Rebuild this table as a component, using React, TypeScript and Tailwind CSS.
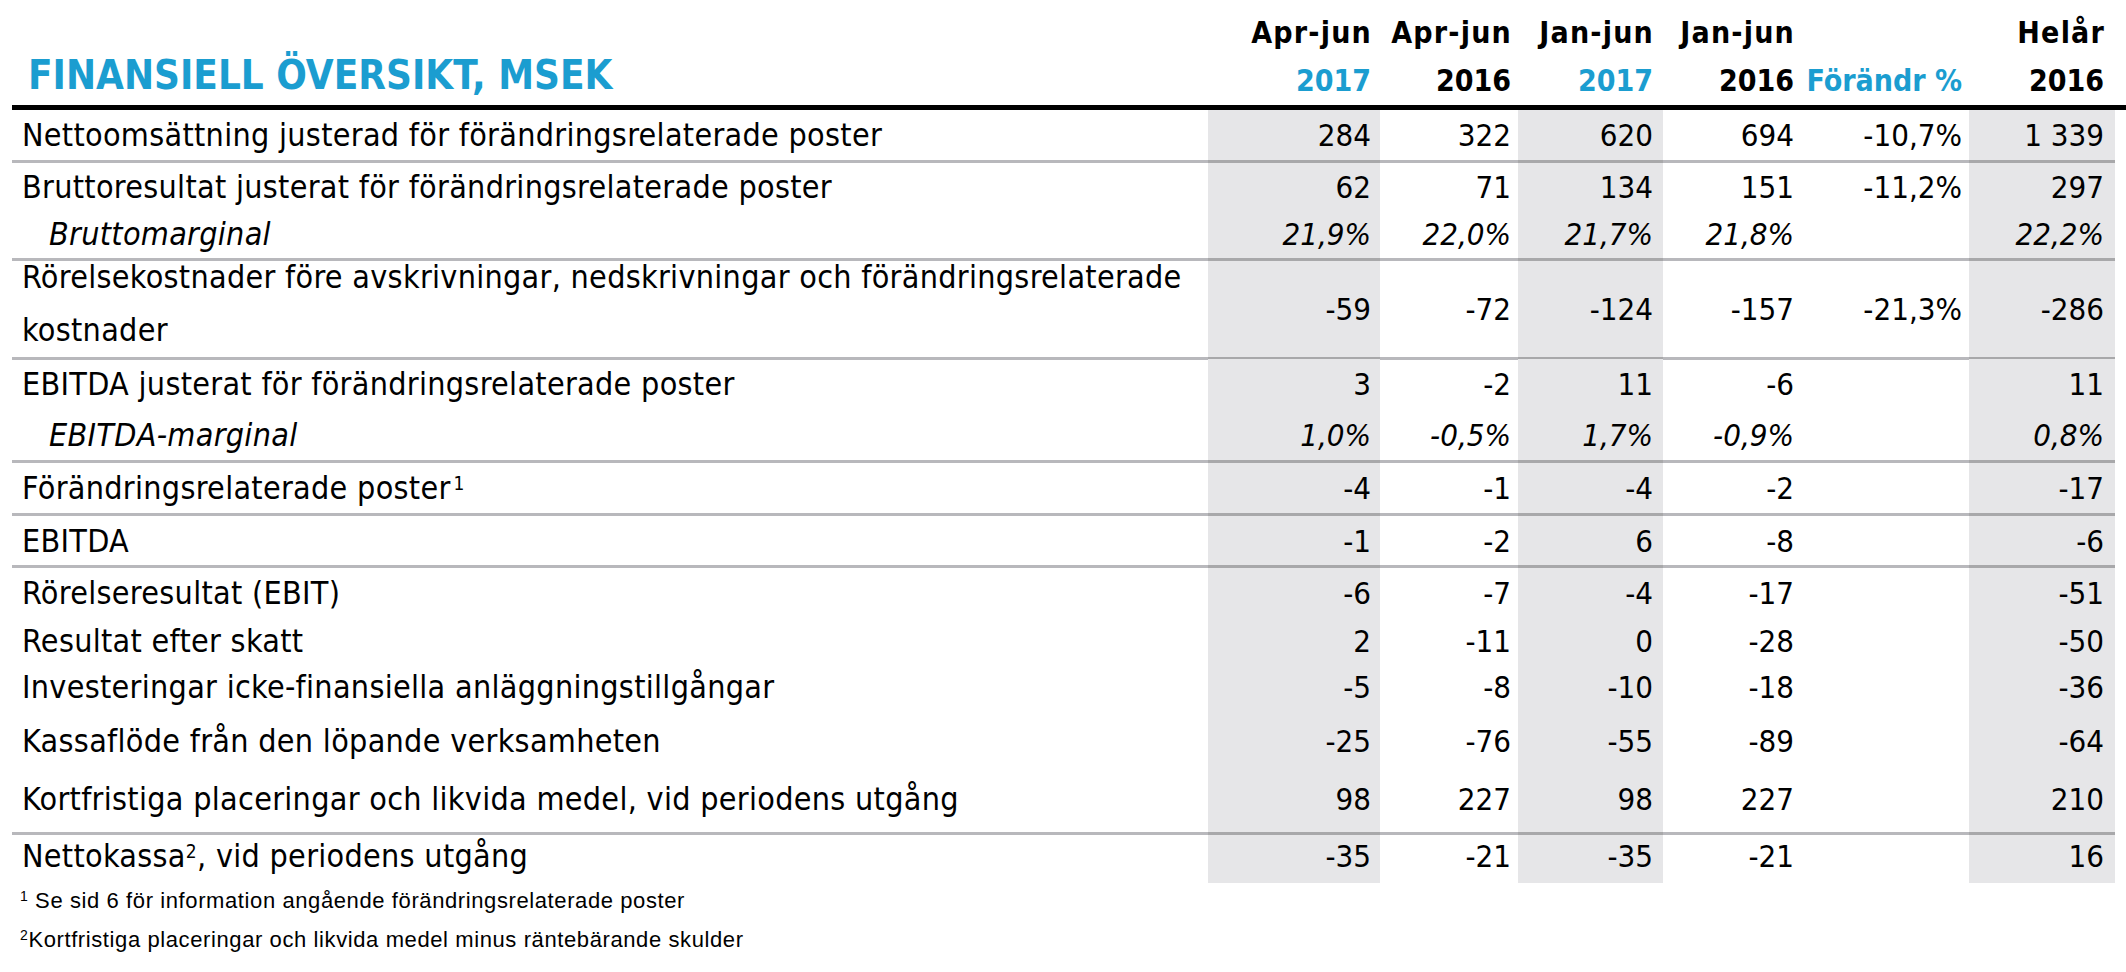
import React from 'react';

const BLUE = 'text-[#1b9dd0]';
const BODY_FONT = "'DejaVu Sans Condensed', 'Open Sans', sans-serif";

const cols = [
  { gray: true, pr: 'pr-[9px]' },
  { gray: false, pr: 'pr-[7px]' },
  { gray: true, pr: 'pr-[10px]' },
  { gray: false, pr: 'pr-[11px]' },
  { gray: false, pr: 'pr-[7px]' },
  { gray: true, pr: 'pr-[11px]' },
];

const grid = 'grid grid-cols-[1196px_172px_138px_145px_142px_164px_146px]';

type Row = {
  label: React.ReactNode;
  vals: string[];
  h: string;
  line?: boolean;
  italic?: boolean;
  pad?: string;
};

const rows: Row[] = [
  { label: 'Nettoomsättning justerad för förändringsrelaterade poster', vals: ['284', '322', '620', '694', '-10,7%', '1 339'], h: 'h-[53px]', line: true },
  { label: 'Bruttoresultat justerat för förändringsrelaterade poster', vals: ['62', '71', '134', '151', '-11,2%', '297'], h: 'h-[47px]' },
  { label: 'Bruttomarginal', vals: ['21,9%', '22,0%', '21,7%', '21,8%', '', '22,2%'], h: 'h-[51px]', line: true, italic: true },
  {
    label: (
      <span className="block leading-[53px] -mt-[10px]">
        Rörelsekostnader före avskrivningar, nedskrivningar och förändringsrelaterade
        <br />
        kostnader
      </span>
    ),
    vals: ['-59', '-72', '-124', '-157', '-21,3%', '-286'],
    h: 'h-[98px]',
    line: true,
  },
  { label: 'EBITDA justerat för förändringsrelaterade poster', vals: ['3', '-2', '11', '-6', '', '11'], h: 'h-[50px]' },
  { label: 'EBITDA-marginal', vals: ['1,0%', '-0,5%', '1,7%', '-0,9%', '', '0,8%'], h: 'h-[54px]', line: true, italic: true },
  {
    label: (
      <>
        Förändringsrelaterade poster<sup className="text-[19px] ml-[3px]">1</sup>
      </>
    ),
    vals: ['-4', '-1', '-4', '-2', '', '-17'],
    h: 'h-[53px]',
    line: true,
  },
  { label: 'EBITDA', vals: ['-1', '-2', '6', '-8', '', '-6'], h: 'h-[52px]', line: true },
  { label: 'Rörelseresultat (EBIT)', vals: ['-6', '-7', '-4', '-17', '', '-51'], h: 'h-[50px]' },
  { label: 'Resultat efter skatt', vals: ['2', '-11', '0', '-28', '', '-50'], h: 'h-[46px]' },
  { label: 'Investeringar icke-finansiella anläggningstillgångar', vals: ['-5', '-8', '-10', '-18', '', '-36'], h: 'h-[46px]' },
  { label: 'Kassaflöde från den löpande verksamheten', vals: ['-25', '-76', '-55', '-89', '', '-64'], h: 'h-[62px]' },
  { label: 'Kortfristiga placeringar och likvida medel, vid periodens utgång', vals: ['98', '227', '98', '227', '', '210'], h: 'h-[63px]', line: true, pad: 'pb-[6px]' },
  {
    label: (
      <>
        Nettokassa<sup className="text-[19px]">2</sup>, vid periodens utgång
      </>
    ),
    vals: ['-35', '-21', '-35', '-21', '', '16'],
    h: 'h-[48px]',
    pad: 'pb-[6px]',
  },
];

const headers = [
  { top: 'Apr-jun', bottom: '2017', blue: true },
  { top: 'Apr-jun', bottom: '2016', blue: false },
  { top: 'Jan-jun', bottom: '2017', blue: true },
  { top: 'Jan-jun', bottom: '2016', blue: false },
  { top: '', bottom: 'Förändr %', blue: true },
  { top: 'Helår', bottom: '2016', blue: false },
];

export default function App() {
  return (
    <div
      className="w-[2126px] h-[972px] bg-white text-black pl-[12px] overflow-hidden"
      style={{ fontFamily: BODY_FONT }}
    >
      {/* header */}
      <div className={`${grid} h-[110px] border-b-[5px] border-black`}>
        <div className="flex items-end pl-[16px] pb-[6px]">
          <h1 className={`text-[40px] font-bold leading-[48px] ${BLUE}`}>
            FINANSIELL ÖVERSIKT, MSEK
          </h1>
        </div>
        {headers.map((h, i) => (
          <div key={i} className={`flex flex-col justify-end text-right text-[30px] font-bold whitespace-nowrap ${cols[i].pr}`}>
            <div className="leading-[48px] h-[48px] tracking-[1.2px] -mr-[1px]">{h.top}</div>
            <div className={`leading-[48px] h-[48px] ${h.blue ? BLUE : ''}`}>{h.bottom}</div>
          </div>
        ))}
      </div>

      {/* body */}
      {rows.map((r, ri) => (
        <div key={ri} className={`${grid} ${r.h}`}>
          <div
            className={`flex items-center text-[32px] leading-[40px] tracking-[0.3px] whitespace-nowrap ${r.italic ? 'italic pl-[37px]' : 'pl-[10px]'} ${r.pad ?? ''} ${
              r.line ? 'border-b-[3px] border-[#b8b8bc]' : ''
            }`}
          >
            <span>{r.label}</span>
          </div>
          {r.vals.map((v, ci) => (
            <div
              key={ci}
              className={`flex items-center justify-end text-[31px] leading-[40px] whitespace-nowrap ${cols[ci].pr} ${r.italic ? 'italic' : ''} ${r.pad ?? ''} ${
                cols[ci].gray ? 'bg-[#e6e6e8]' : ''
              } ${r.line ? (cols[ci].gray ? 'border-b-[3px] border-[#a8a8aa]' : 'border-b-[3px] border-[#b8b8bc]') : ''}`}
            >
              {v}
            </div>
          ))}
        </div>
      ))}

      {/* footnotes */}
      <div className="pl-[8px] text-[22px]" style={{ fontFamily: "'Liberation Sans', Arial, sans-serif" }}>
        <div className="leading-[36px] h-[36px] tracking-[0.6px]">
          <sup className="text-[14px]">1</sup> Se sid 6 för information angående förändringsrelaterade poster
        </div>
        <div className="leading-[42px] h-[42px] tracking-[0.6px]">
          <sup className="text-[14px]">2</sup>Kortfristiga placeringar och likvida medel minus räntebärande skulder
        </div>
      </div>
    </div>
  );
}
